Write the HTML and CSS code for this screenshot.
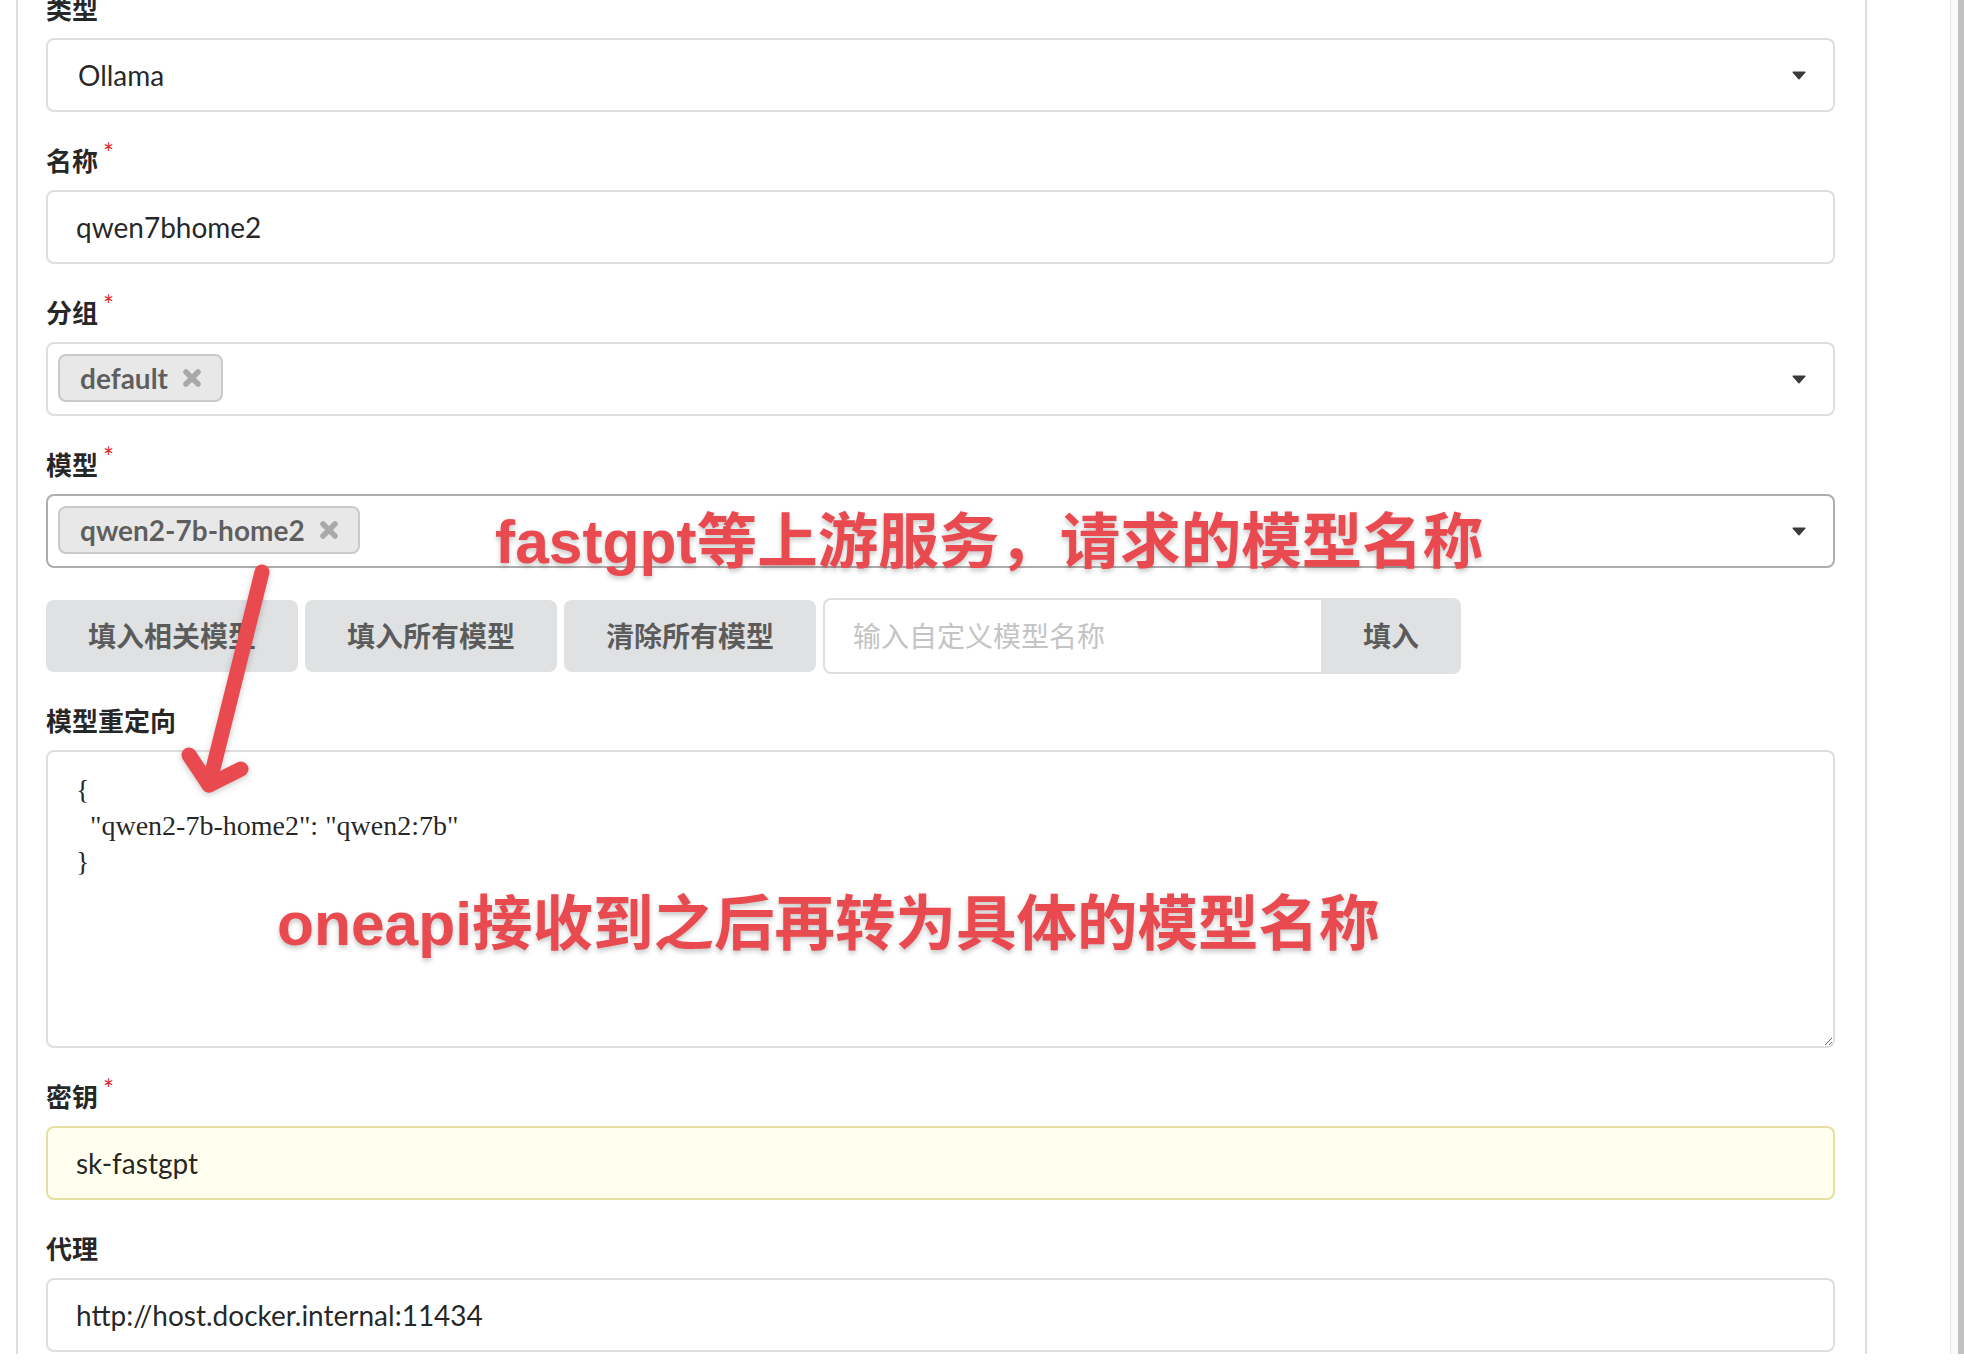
FILE: index.html
```html
<!DOCTYPE html>
<html lang="zh-CN">
<head>
<meta charset="utf-8">
<title>编辑渠道</title>
<link rel="stylesheet" href="styles.css">
</head>
<body>
<div class="page">
  <div class="segment">
    <form class="form">
      <div class="field">
        <label class="label required">类型</label>
        <div class="control dropdown">
          <span class="dd-text">Ollama</span>
          <svg class="caret" width="14" height="9" viewBox="0 0 14 9"><path d="M1.2 1.2h11.6L7 7.8z" fill="#3a3a3a" stroke="#3a3a3a" stroke-width="1.4" stroke-linejoin="round"/></svg>
        </div>
      </div>

      <div class="field">
        <label class="label required">名称</label>
        <input class="control input" type="text" value="qwen7bhome2">
      </div>

      <div class="field">
        <label class="label required">分组</label>
        <div class="control dropdown multi">
          <span class="tag">default<svg class="del" width="20" height="20" viewBox="0 0 20 20"><path d="M4 4L16 16M16 4L4 16" stroke="#a9a9a9" stroke-width="5.5" stroke-linecap="round"/></svg></span>
          <svg class="caret" width="14" height="9" viewBox="0 0 14 9"><path d="M1.2 1.2h11.6L7 7.8z" fill="#3a3a3a" stroke="#3a3a3a" stroke-width="1.4" stroke-linejoin="round"/></svg>
        </div>
      </div>

      <div class="field">
        <label class="label required">模型</label>
        <div class="control dropdown multi active">
          <span class="tag">qwen2-7b-home2<svg class="del" width="20" height="20" viewBox="0 0 20 20"><path d="M4 4L16 16M16 4L4 16" stroke="#a9a9a9" stroke-width="5.5" stroke-linecap="round"/></svg></span>
          <svg class="caret" width="14" height="9" viewBox="0 0 14 9"><path d="M1.2 1.2h11.6L7 7.8z" fill="#3a3a3a" stroke="#3a3a3a" stroke-width="1.4" stroke-linejoin="round"/></svg>
        </div>
      </div>

      <div class="actions">
        <button type="button" class="btn">填入相关模型</button>
        <button type="button" class="btn">填入所有模型</button>
        <button type="button" class="btn">清除所有模型</button>
        <div class="action-input">
          <input type="text" placeholder="输入自定义模型名称">
          <button type="button" class="btn btn-attached">填入</button>
        </div>
      </div>

      <div class="field">
        <label class="label">模型重定向</label>
        <textarea class="textarea">{
  "qwen2-7b-home2": "qwen2:7b"
}</textarea>
      </div>

      <div class="field">
        <label class="label required">密钥</label>
        <input class="control input autofill" type="text" value="sk-fastgpt">
      </div>

      <div class="field">
        <label class="label">代理</label>
        <input class="control input" type="text" value="http://host.docker.internal:11434">
      </div>
    </form>
  </div>

  <div class="annot annot-top">fastgpt等上游服务，请求的模型名称</div>
  <div class="annot annot-bottom">oneapi接收到之后再转为具体的模型名称</div>
  <svg class="arrow" width="110" height="260" viewBox="0 0 110 260">
    <g fill="none" stroke="#e84a4f" stroke-width="15" stroke-linecap="round" stroke-linejoin="round">
      <path d="M92 20L39 233"/>
      <path d="M19 203L39 233L71 217"/>
    </g>
  </svg>

  <div class="scrollbar"><div class="thumb"></div></div>
</div>
</body>
</html>
```

FILE: styles.css
```css
* {
  box-sizing: border-box;
}

html,
body {
  margin: 0;
  padding: 0;
  background: #ffffff;
  overflow: hidden;
}

body {
  font-family: Lato, "Noto Sans CJK SC", sans-serif;
  font-size: 28px;
  color: rgba(0, 0, 0, 0.87);
}

.page {
  position: relative;
  width: 1964px;
  height: 1366px;
}

.segment {
  margin-left: 16px;
  width: 1851px;
  height: 1366px;
  border-left: 2px solid #dedede;
  border-right: 2px solid #dedede;
  padding: 0 30px 0 28px;
}

.form {
  margin: -12px 0 0;
}

.field {
  margin-bottom: 28px;
}

.label {
  display: block;
  font-family: Lato, "Noto Sans CJK SC", sans-serif;
  font-size: 26px;
  line-height: 42px;
  font-weight: 700;
  margin-bottom: 8px;
  color: rgba(0, 0, 0, 0.87);
}

.required::after {
  content: "*";
  display: inline-block;
  margin-left: 5px;
  color: #db2828;
  font-family: Lato, sans-serif;
  font-weight: 400;
  font-size: 26px;
  line-height: 1;
  vertical-align: 8px;
}

.control {
  display: flex;
  align-items: center;
  width: 100%;
  height: 74px;
  border: 2px solid #dedede;
  border-radius: 8px;
  background: #ffffff;
  font-family: Lato, "Noto Sans CJK SC", sans-serif;
  font-size: 28px;
  color: rgba(0, 0, 0, 0.87);
}

.input {
  padding: 0 28px;
  outline: none;
}

.autofill {
  background: #fffff0;
  border-color: #e5dfa1;
}

.dropdown {
  padding: 0 27px 0 30px;
}

.dropdown .dd-text {
  flex: 1;
}

.caret {
  margin-left: auto;
  flex: none;
}

.multi {
  padding-left: 10px;
}

.multi.active {
  border-color: #adadad;
}

.tag {
  display: inline-flex;
  align-items: center;
  height: 48px;
  margin-top: -3px;
  padding: 0 21px 0 22px;
  background: #e8e8e8;
  border-radius: 8px;
  box-shadow: inset 0 0 0 2px rgba(34, 36, 38, 0.15);
  font-weight: 700;
  font-size: 28px;
  line-height: 28px;
  color: rgba(0, 0, 0, 0.6);
}

.del {
  margin-left: 14px;
  flex: none;
}

.actions {
  display: flex;
  align-items: center;
  gap: 7px;
  height: 80px;
  margin-bottom: 24px;
}

.btn {
  height: 72px;
  padding: 0 42px;
  border: 0;
  border-radius: 8px;
  background: #e0e1e2;
  color: rgba(0, 0, 0, 0.6);
  font-family: Lato, "Noto Sans CJK SC", sans-serif;
  font-size: 28px;
  font-weight: 700;
  line-height: 28px;
  white-space: nowrap;
}

.action-input {
  display: flex;
  height: 76px;
}

.action-input input {
  width: 498px;
  height: 76px;
  padding: 0 28px;
  border: 2px solid #dedede;
  border-right: 0;
  border-radius: 8px 0 0 8px;
  font-family: Lato, "Noto Sans CJK SC", sans-serif;
  font-size: 28px;
  color: rgba(0, 0, 0, 0.87);
  outline: none;
}

.action-input input::placeholder {
  color: #c4c4c4;
}

.btn-attached {
  height: 76px;
  width: 140px;
  padding: 0;
  border-radius: 0 8px 8px 0;
}

.textarea {
  display: block;
  width: 100%;
  height: 298px;
  padding: 20px 28px;
  border: 2px solid #dedede;
  border-radius: 8px;
  font-family: "Liberation Serif", serif;
  font-size: 28px;
  line-height: 36px;
  color: rgba(0, 0, 0, 0.87);
  outline: none;
  resize: both;
}

.annot {
  position: absolute;
  font-family: "Liberation Sans", "Noto Sans CJK SC", sans-serif;
  font-weight: 700;
  font-size: 60.5px;
  line-height: 60px;
  color: #e84a4f;
  white-space: nowrap;
  text-shadow: 0 3px 5px rgba(0, 0, 0, 0.22);
}

.annot-top {
  left: 495px;
  top: 524px;
}

.annot-bottom {
  left: 277px;
  top: 906px;
}

.arrow {
  position: absolute;
  left: 170px;
  top: 564px;
  filter: drop-shadow(0 2px 3px rgba(0, 0, 0, 0.22));
}

.scrollbar {
  position: absolute;
  top: 0;
  right: 0;
  width: 14px;
  height: 1366px;
  background: #fafafa;
  border-left: 1px solid #e6e6e6;
  display: flex;
  justify-content: flex-end;
}

.thumb {
  width: 6px;
  height: 100%;
  background: #c1c1c1;
}
```
